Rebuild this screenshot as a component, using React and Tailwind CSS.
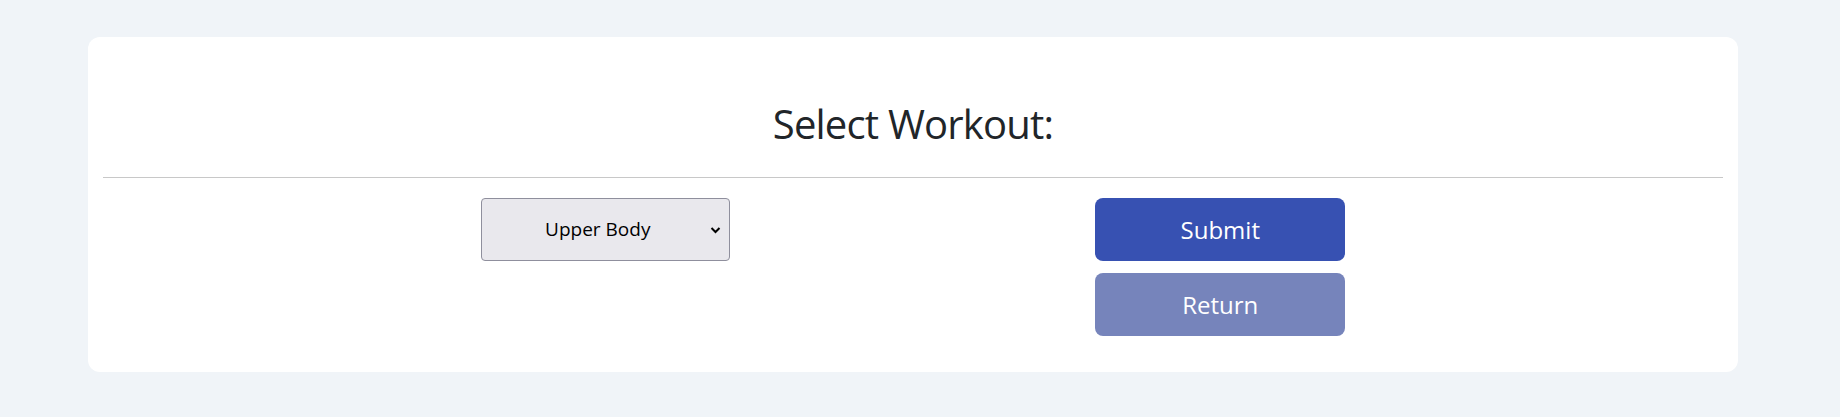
import { useState } from "react";

export default function App() {
  const [workout, setWorkout] = useState("upper");

  return (
    <div className="min-h-screen bg-[#f0f4f8] pl-[88px] pt-[37px] font-['Open_Sans',sans-serif]">
      <div className="h-[335px] w-[1650px] rounded-xl bg-white px-[15px]">
        <h1 className="pt-[63px] text-center text-[40px] leading-[48px] tracking-[-0.8px] text-[#212529]">
          Select Workout:
        </h1>
        <hr className="mt-[29px] border-t border-[#c8c8c8]" />
        <div className="mx-auto grid w-[1229px] grid-cols-2 items-start pt-[20px]">
          <div className="flex justify-center">
            <div className="relative">
              <select
                value={workout}
                onChange={(e) => setWorkout(e.target.value)}
                className="block h-[63px] w-[249px] appearance-none rounded-[4px] border border-[#8f8f9d] bg-[#e9e8ed] pl-2 pr-6 text-center text-[19px] text-black"
              >
                <option value="upper">Upper Body</option>
                <option value="lower">Lower Body</option>
                <option value="full">Full Body</option>
              </select>
              <svg
                className="pointer-events-none absolute right-[9px] top-[28px]"
                width="11"
                height="8"
                viewBox="0 0 11 8"
                fill="none"
                stroke="#000"
                strokeWidth="2"
              >
                <path d="M1.5 2l4 4 4-4" />
              </svg>
            </div>
          </div>
          <div className="flex flex-col items-center gap-3">
            <button className="h-[63px] w-[250px] rounded-lg bg-[#3751b2] text-[24px] text-white">
              Submit
            </button>
            <button className="h-[63px] w-[250px] rounded-lg bg-[#7684bb] text-[24px] text-white">
              Return
            </button>
          </div>
        </div>
      </div>
    </div>
  );
}
